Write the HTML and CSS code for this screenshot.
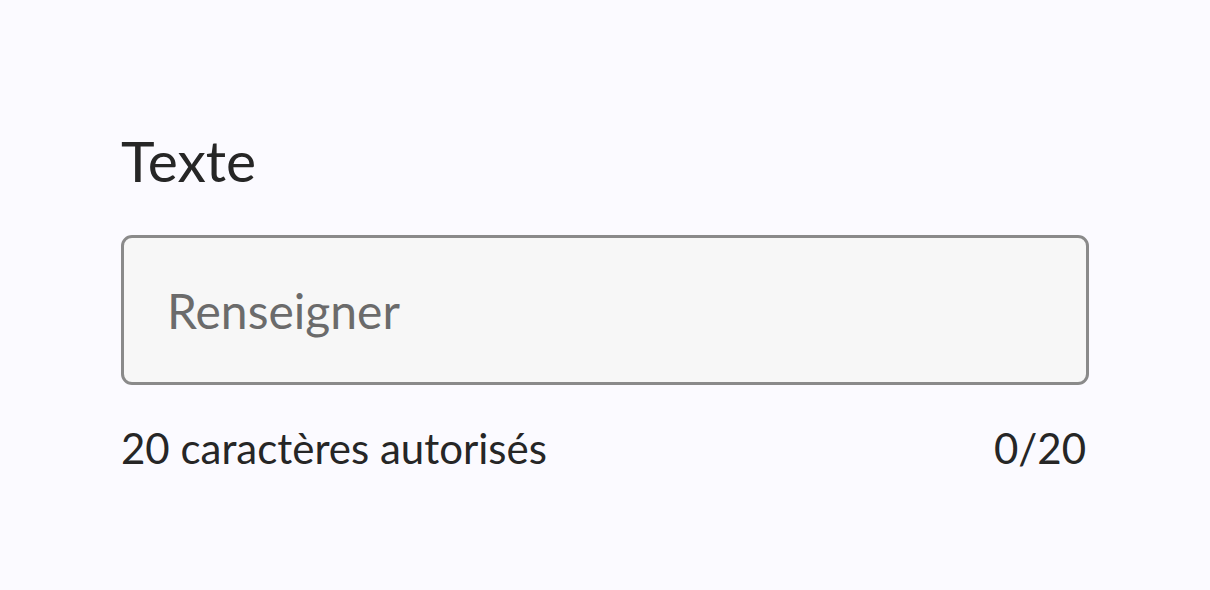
FILE: index.html
```html
<!DOCTYPE html>
<html lang="fr">
<head>
<meta charset="utf-8">
<title>Texte</title>
<link rel="stylesheet" href="styles.css">
</head>
<body>
<div class="field">
  <label class="label" for="txt">Texte</label>
  <input class="input" id="txt" type="text" placeholder="Renseigner" maxlength="20">
  <div class="helper">
    <span class="hint">20 caractères autorisés</span>
    <span class="count">0/20</span>
  </div>
</div>
</body>
</html>
```

FILE: styles.css
```css
html, body {
  margin: 0;
  padding: 0;
  background: #fbfaff;
}
body {
  font-family: "Lato", "Open Sans", sans-serif;
  color: #262626;
}
.field {
  display: flex;
  flex-direction: column;
  padding: 128px 121px 0 121px;
  width: 968px;
}
.label {
  font-size: 57px;
  line-height: 64px;
  color: #262626;
}
.input {
  margin-top: 43px;
  box-sizing: border-box;
  width: 968px;
  height: 150px;
  border: 3px solid #8a8a8a;
  border-radius: 11px;
  background: #f7f7f7;
  padding: 0 43px;
  font-family: inherit;
  font-size: 48px;
  color: #262626;
  outline: none;
}
.input::placeholder {
  color: #6b6b6b;
}
.helper {
  display: flex;
  justify-content: space-between;
  margin-top: 39px;
  font-size: 42px;
  line-height: 48px;
  padding-right: 3px;
}
```
